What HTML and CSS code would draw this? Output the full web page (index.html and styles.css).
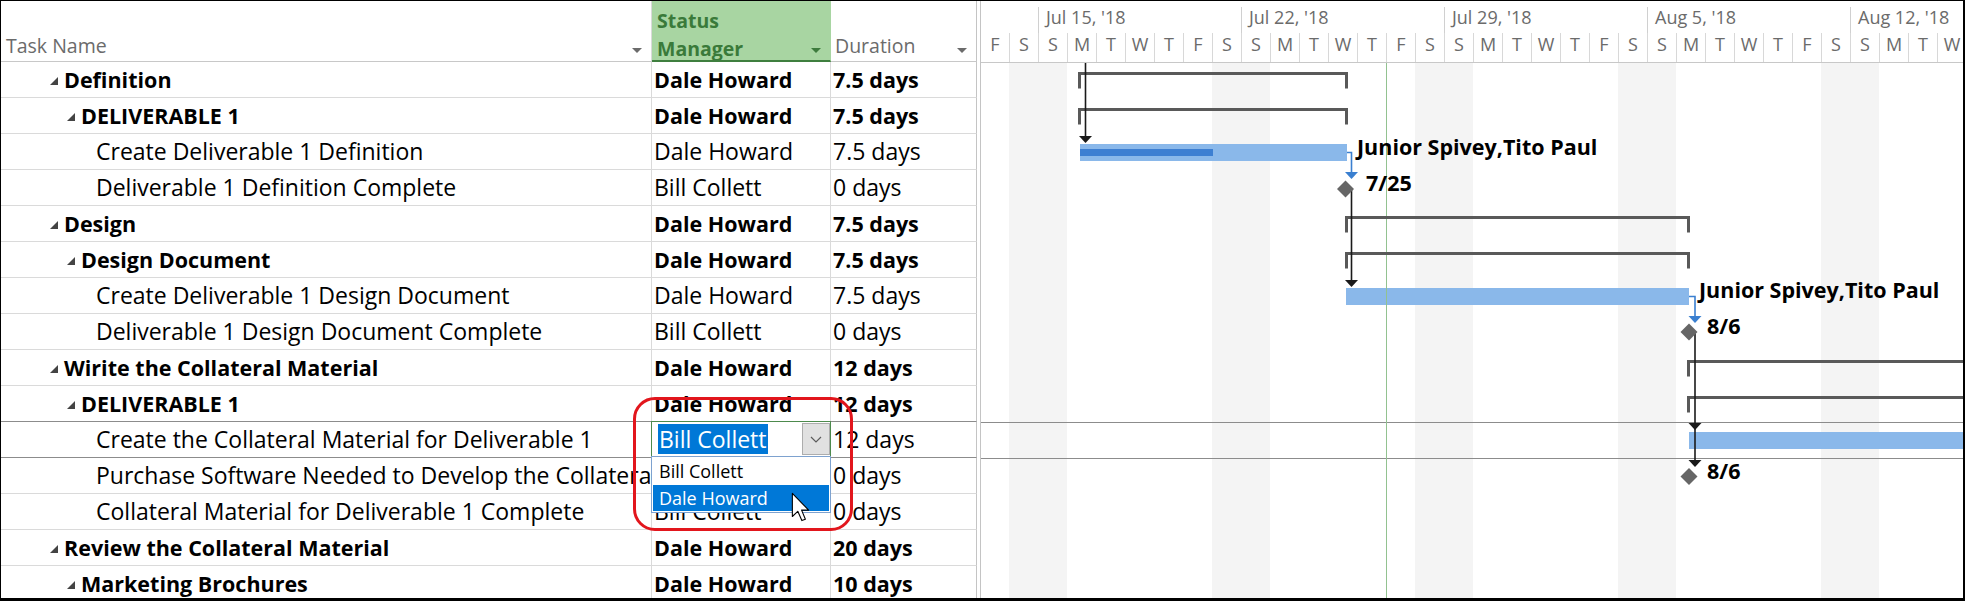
FILE: index.html
```html
<!DOCTYPE html>
<html lang="en">
<head>
    <meta charset="UTF-8">
    <title>Gantt Chart - Status Manager</title>
    <link rel="stylesheet" href="styles.css">
</head>
<body>
    <div class="frame">
        <div class="sheet">
            <div class="grid">
                <div class="hrow">
                    <div class="hcell c-name"><span>Task Name</span><i class="filter"></i></div>
                    <div class="hcell c-res status-h"><span class="status-title">Status<br>Manager</span><i class="filter green"></i></div>
                    <div class="hcell c-dur"><span>Duration</span><i class="filter"></i></div>
                </div>

                <div class="row bold">
                    <div class="c-name l1"><b class="tri"></b>Definition</div>
                    <div class="c-res">Dale Howard</div>
                    <div class="c-dur">7.5 days</div>
                </div>
                <div class="row bold">
                    <div class="c-name l2"><b class="tri"></b>DELIVERABLE 1</div>
                    <div class="c-res">Dale Howard</div>
                    <div class="c-dur">7.5 days</div>
                </div>
                <div class="row">
                    <div class="c-name l3">Create Deliverable 1 Definition</div>
                    <div class="c-res">Dale Howard</div>
                    <div class="c-dur">7.5 days</div>
                </div>
                <div class="row">
                    <div class="c-name l3">Deliverable 1 Definition Complete</div>
                    <div class="c-res">Bill Collett</div>
                    <div class="c-dur">0 days</div>
                </div>
                <div class="row bold">
                    <div class="c-name l1"><b class="tri"></b>Design</div>
                    <div class="c-res">Dale Howard</div>
                    <div class="c-dur">7.5 days</div>
                </div>
                <div class="row bold">
                    <div class="c-name l2"><b class="tri"></b>Design Document</div>
                    <div class="c-res">Dale Howard</div>
                    <div class="c-dur">7.5 days</div>
                </div>
                <div class="row">
                    <div class="c-name l3">Create Deliverable 1 Design Document</div>
                    <div class="c-res">Dale Howard</div>
                    <div class="c-dur">7.5 days</div>
                </div>
                <div class="row">
                    <div class="c-name l3">Deliverable 1 Design Document Complete</div>
                    <div class="c-res">Bill Collett</div>
                    <div class="c-dur">0 days</div>
                </div>
                <div class="row bold">
                    <div class="c-name l1"><b class="tri"></b>Wirite the Collateral Material</div>
                    <div class="c-res">Dale Howard</div>
                    <div class="c-dur">12 days</div>
                </div>
                <div class="row bold before-sel">
                    <div class="c-name l2"><b class="tri"></b>DELIVERABLE 1</div>
                    <div class="c-res">Dale Howard</div>
                    <div class="c-dur">12 days</div>
                </div>
                <div class="row sel">
                    <div class="c-name l3">Create the Collateral Material for Deliverable 1</div>
                    <div class="c-res">Bill Collett</div>
                    <div class="c-dur">12 days</div>
                </div>
                <div class="row">
                    <div class="c-name l3">Purchase Software Needed to Develop the Collateral Material</div>
                    <div class="c-res">Dale Howard</div>
                    <div class="c-dur">0 days</div>
                </div>
                <div class="row">
                    <div class="c-name l3">Collateral Material for Deliverable 1 Complete</div>
                    <div class="c-res">Bill Collett</div>
                    <div class="c-dur">0 days</div>
                </div>
                <div class="row bold">
                    <div class="c-name l1"><b class="tri"></b>Review the Collateral Material</div>
                    <div class="c-res">Dale Howard</div>
                    <div class="c-dur">20 days</div>
                </div>
                <div class="row bold">
                    <div class="c-name l2"><b class="tri"></b>Marketing Brochures</div>
                    <div class="c-res">Dale Howard</div>
                    <div class="c-dur">10 days</div>
                </div>
            </div>

            <div class="gap"></div>

            <div class="gantt">
                <div class="weeks">
                    <div class="wk first"></div>
                    <div class="wk">Jul 15, '18</div>
                    <div class="wk">Jul 22, '18</div>
                    <div class="wk">Jul 29, '18</div>
                    <div class="wk">Aug 5, '18</div>
                    <div class="wk last">Aug 12, '18</div>
                </div>
                <div class="days">
                    <span>F</span><span>S</span>
                    <span>S</span><span>M</span><span>T</span><span>W</span><span>T</span><span>F</span><span>S</span>
                    <span>S</span><span>M</span><span>T</span><span>W</span><span>T</span><span>F</span><span>S</span>
                    <span>S</span><span>M</span><span>T</span><span>W</span><span>T</span><span>F</span><span>S</span>
                    <span>S</span><span>M</span><span>T</span><span>W</span><span>T</span><span>F</span><span>S</span>
                    <span>S</span><span>M</span><span>T</span><span>W</span>
                </div>

                <div class="chart">
                    <div class="cols">
                        <i></i><i class="we"></i>
                        <i class="we"></i><i></i><i></i><i></i><i></i><i></i><i class="we"></i>
                        <i class="we"></i><i></i><i></i><i></i><i></i><i></i><i class="we"></i>
                        <i class="we"></i><i></i><i></i><i></i><i></i><i></i><i class="we"></i>
                        <i class="we"></i><i></i><i></i><i></i><i></i><i></i><i class="we"></i>
                        <i class="we"></i><i></i><i></i><i></i>
                    </div>

                    <div class="rowline top"></div>
                    <div class="rowline bottom"></div>

                    <div class="bar bar-def"></div>
                    <div class="progress"></div>
                    <div class="bar bar-design"></div>
                    <div class="bar bar-collateral"></div>

                    <div class="status-line"></div>

                    <svg class="links" width="982" height="536" viewBox="0 0 982 536">
                        <!-- summary brackets -->
                        <g fill="none" stroke="#595959" stroke-width="3">
                            <path d="M98.5 25.5 V10.5 H365.5 V25.5"/>
                            <path d="M98.5 61.5 V46.5 H365.5 V61.5"/>
                            <path d="M365.5 169.5 V154.5 H707.5 V169.5"/>
                            <path d="M365.5 205.5 V190.5 H707.5 V205.5"/>
                            <path d="M707.5 313.5 V298.5 H990"/>
                            <path d="M707.5 349.5 V334.5 H990"/>
                        </g>
                        <!-- links -->
                        <g fill="none" stroke="#1a1a1a" stroke-width="1.6">
                            <path d="M104.5 0 V75"/>
                            <path d="M370.5 126 V219"/>
                            <path d="M714 269 V399"/>
                        </g>
                        <g fill="#1a1a1a">
                            <polygon points="98,73 111,73 104.5,80"/>
                            <polygon points="364,217 377,217 370.5,224"/>
                            <polygon points="707.5,360 720.5,360 714,367"/>
                            <polygon points="707.5,397 720.5,397 714,404"/>
                        </g>
                        <g fill="none" stroke="#3a7fd0" stroke-width="1.6">
                            <path d="M366 89.5 H370.5 V111"/>
                            <path d="M708 233.5 H714 V255"/>
                        </g>
                        <g fill="#3a7fd0">
                            <polygon points="364,109 377,109 370.5,116"/>
                            <polygon points="707.5,253 720.5,253 714,260"/>
                        </g>
                        <!-- milestones -->
                        <g fill="#666">
                            <polygon points="356,126 364.5,117.5 373,126 364.5,134.5"/>
                            <polygon points="699.5,269 708,260.5 716.5,269 708,277.5"/>
                            <polygon points="699.5,413.5 708,405 716.5,413.5 708,422"/>
                        </g>
                    </svg>

                    <div class="lbl lbl-res1">Junior Spivey,Tito Paul</div>
                    <div class="lbl lbl-date1">7/25</div>
                    <div class="lbl lbl-res2">Junior Spivey,Tito Paul</div>
                    <div class="lbl lbl-date2">8/6</div>
                    <div class="lbl lbl-date3">8/6</div>
                </div>
            </div>
        </div>

        <!-- in-cell editor with open list -->
        <div class="editor">
            <span class="sel-text">Bill Collett</span>
            <span class="dd-btn">
                <svg width="12" height="7" viewBox="0 0 12 7"><polyline points="1,1 6,6 11,1" fill="none" stroke="#5c5c5c" stroke-width="1.2"/></svg>
            </span>
        </div>
        <div class="dd-list">
            <div class="dd-item">Bill Collett</div>
            <div class="dd-item hot">Dale Howard</div>
        </div>

        <div class="callout"></div>

        <svg class="cursor" width="19" height="30" viewBox="0 0 14 22">
            <path d="M1 1 L1 18 L5 14.2 L8 21 L10.6 20 L7.8 13.3 L13 13.3 Z" fill="#fff" stroke="#000" stroke-width="0.8" stroke-linejoin="round"/>
        </svg>
    </div>
</body>
</html>
```

FILE: styles.css
```css
body {
    margin: 0;
    background-color: #fff;
    font-family: "Open Sans", "Noto Sans", sans-serif;
    color: #000;
}
.frame {
    position: relative;
    width: 1965px;
    height: 601px;
    box-sizing: border-box;
    border-style: solid;
    border-color: #000;
    border-width: 1px 2px 3px 1px;
    overflow: hidden;
}
.sheet {
    display: flex;
    height: 100%;
}

/* task grid */
.grid {
    width: 976px;
    flex: none;
}
.hrow {
    display: flex;
    height: 61px;
}
.row {
    display: flex;
    height: 36px;
}
.hrow > div,
.row > div {
    box-sizing: border-box;
    border-right: 1px solid #dadada;
    border-bottom: 1px solid #dadada;
    white-space: nowrap;
    overflow: hidden;
}
.c-name {
    width: 651px;
}
.c-res {
    width: 179px;
}
.hrow > .c-dur,
.row > .c-dur {
    width: 146px;
    border-right-color: #c4c4c4;
}
.hcell {
    display: flex;
    justify-content: space-between;
    align-items: flex-end;
    padding: 0 9px 3px 5px;
    font-size: 19.5px;
    line-height: 24px;
    color: #6b6b6b;
}
.hrow > .hcell {
    border-bottom-color: #c8c8c8;
}
.hcell.c-dur {
    padding-left: 4px;
}
.filter {
    width: 0;
    height: 0;
    border-left: 5px solid transparent;
    border-right: 5px solid transparent;
    border-top: 5px solid #6b6b6b;
    margin-bottom: 5px;
}
.filter.green {
    border-top-color: #3d7b3d;
}
.hrow > .status-h {
    background-color: #a8d5a2;
    border-right-color: #a8d5a2;
    border-bottom: 2px solid #3f7f3f;
    align-items: flex-start;
    padding-top: 6px;
}
.status-title {
    font-weight: bold;
    color: #3a7a3a;
    line-height: 28px;
}
.status-h .filter {
    align-self: flex-end;
    margin-bottom: 4px;
}

.row > div {
    font-size: 23px;
    line-height: 35px;
    padding-left: 2px;
}
.row.bold > div {
    font-weight: bold;
    font-size: 21.5px;
}
.row.before-sel > div,
.row.sel > div {
    border-bottom-color: #8c8c8c;
}
.row > .l1,
.row > .l2 {
    display: flex;
    align-items: center;
}
.row > .l1 {
    padding-left: 49px;
}
.row > .l2 {
    padding-left: 66px;
}
.row > .l3 {
    padding-left: 95px;
}
.tri {
    flex: none;
    width: 0;
    height: 0;
    border-left: 8px solid transparent;
    border-bottom: 8px solid #444;
    margin: 2px 6px 0 0;
}

.gap {
    width: 3px;
    flex: none;
}

/* gantt */
.gantt {
    position: relative;
    width: 983px;
    flex: none;
    box-sizing: border-box;
    border-left: 1px solid #c4c4c4;
    overflow: hidden;
}
.weeks {
    display: flex;
    height: 32px;
}
.wk {
    flex: none;
    width: 203px;
    height: 26px;
    margin-top: 6px;
    box-sizing: border-box;
    border-left: 1px solid #d0d0d0;
    padding-left: 7px;
    font-size: 18px;
    line-height: 20px;
    color: #6b6b6b;
    white-space: nowrap;
}
.wk.first {
    width: 57px;
    border-left: none;
}
.wk.last {
    width: 150px;
}
.days {
    display: flex;
    height: 29px;
    border-bottom: 1px solid #c8c8c8;
}
.days span {
    flex: none;
    width: 29px;
    box-sizing: border-box;
    border-left: 1px solid #d8d8d8;
    text-align: center;
    font-size: 18px;
    line-height: 23px;
    color: #6b6b6b;
}
.days span:first-child {
    width: 28px;
    border-left: none;
}
.chart {
    position: relative;
    height: 536px;
}
.cols {
    display: flex;
    height: 100%;
}
.cols i {
    flex: none;
    width: 29px;
}
.cols i:first-child {
    width: 28px;
}
.cols i.we {
    background-color: #f4f4f4;
}
.rowline {
    position: absolute;
    left: 0;
    right: 0;
    height: 1px;
    background-color: #8c8c8c;
}
.rowline.top {
    top: 359px;
}
.rowline.bottom {
    top: 395px;
}
.status-line {
    position: absolute;
    left: 405px;
    top: 0;
    bottom: 0;
    width: 1px;
    background-color: #92c290;
}
.bar {
    position: absolute;
    height: 17px;
    background-color: #8ab8ea;
}
.bar-def {
    left: 99px;
    top: 81px;
    width: 267px;
}
.bar-design {
    left: 365px;
    top: 225px;
    width: 343px;
}
.bar-collateral {
    left: 708px;
    top: 369px;
    width: 300px;
}
.progress {
    position: absolute;
    left: 99px;
    top: 86px;
    width: 133px;
    height: 7px;
    background-color: #3d7fd2;
}
.links {
    position: absolute;
    left: 0;
    top: 0;
}
.lbl {
    position: absolute;
    font-weight: bold;
    font-size: 21.5px;
    line-height: 30px;
    white-space: nowrap;
}
.lbl-res1 {
    left: 376px;
    top: 69px;
}
.lbl-date1 {
    left: 385px;
    top: 105px;
}
.lbl-res2 {
    left: 718px;
    top: 212px;
}
.lbl-date2 {
    left: 726px;
    top: 248px;
}
.lbl-date3 {
    left: 726px;
    top: 393px;
}

/* editor + dropdown */
.editor {
    position: absolute;
    left: 650px;
    top: 420px;
    width: 180px;
    height: 36px;
    box-sizing: border-box;
    border: 1px solid #4d8a4d;
    background-color: #fff;
    display: flex;
    align-items: center;
    justify-content: space-between;
    padding-left: 6px;
}
.sel-text {
    background-color: #0078d7;
    color: #fff;
    font-size: 23px;
    line-height: 30px;
    padding: 0 1px;
    white-space: nowrap;
}
.dd-btn {
    width: 28px;
    height: 32px;
    box-sizing: border-box;
    background-color: #e1e1e1;
    border: 1px solid #adadad;
    display: flex;
    align-items: center;
    justify-content: center;
}
.dd-list {
    position: absolute;
    left: 650px;
    top: 455px;
    width: 180px;
    height: 57px;
    box-sizing: border-box;
    border: 1px solid #7ea2cf;
    background-color: #fff;
    padding: 0 1px;
    font-size: 18px;
}
.dd-item {
    height: 28px;
    line-height: 28px;
    padding-left: 6px;
    white-space: nowrap;
}
.dd-item.hot {
    height: 26px;
    line-height: 26px;
    background-color: #0078d7;
    color: #fff;
}
.callout {
    position: absolute;
    left: 632px;
    top: 396px;
    width: 220px;
    height: 134px;
    box-sizing: border-box;
    border: 3px solid #e2161d;
    border-radius: 22px;
}
.cursor {
    position: absolute;
    left: 790px;
    top: 491px;
}
```
